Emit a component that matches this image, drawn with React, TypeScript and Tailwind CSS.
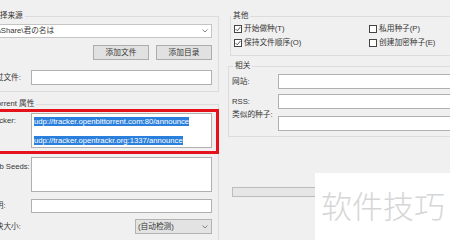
import React from "react";

function Chevron() {
  return (
    <svg width="6" height="4" viewBox="0 0 6 4" fill="none">
      <path d="M0.5 0.5L3 3L5.5 0.5" stroke="#777" strokeWidth="0.9" />
    </svg>
  );
}

function CheckBox({ checked, label }: { checked?: boolean; label: string }) {
  return (
    <div className="flex items-center h-[10px] gap-[2px]">
      <span className="w-[8px] h-[8px] border border-[#444] bg-white flex items-center justify-center shrink-0">
        {checked && (
          <svg width="6" height="6" viewBox="0 0 6 6" fill="none">
            <path d="M0.6 3.1L2.3 4.8L5.4 1" stroke="#444" strokeWidth="0.9" />
          </svg>
        )}
      </span>
      <span>{label}</span>
    </div>
  );
}

export default function App() {
  return (
    <div className="relative w-[450px] h-[240px] overflow-hidden bg-[#f0f0f0] text-[#363636] text-[7.7px] leading-[10px] font-['Liberation_Sans','Noto_Sans_CJK_SC',sans-serif] flex">
      {/* left: source + torrent properties */}
      <div className="ml-[-21px] w-[240px] shrink-0 flex flex-col">
        <div className="mt-[16px] border border-[#dcdcdc] pl-[8px] pr-[6px] pb-[6px] flex flex-col">
          <div className="-mt-[6px] ml-[2px] px-[2px] w-fit bg-[#f0f0f0]">选择来源</div>
          <div className="mt-[3px] h-[14px] bg-white border border-[#c4c4c4] flex items-center justify-between pl-[2px] pr-[3px]">
            <span className="whitespace-nowrap">D:\Share\君の名は</span>
            <Chevron />
          </div>
          <div className="mt-[7px] flex justify-end gap-[7px]">
            <button className="w-[56px] h-[15px] bg-[#e1e1e1] border border-[#adadad] text-[7.7px] leading-[10px]">添加文件</button>
            <button className="w-[56px] h-[15px] bg-[#e1e1e1] border border-[#adadad] text-[7.7px] leading-[10px]">添加目录</button>
          </div>
          <div className="mt-[10px] flex items-center">
            <div className="w-[43px] shrink-0 whitespace-nowrap">跳过文件:</div>
            <div className="flex-1 h-[15px] bg-white border border-[#b0b0b0]" />
          </div>
        </div>

        <div className="mt-[12px] border border-[#dcdcdc] pl-[8px] pr-[6px] pb-[6px] flex flex-col">
          <div className="-mt-[6px] ml-[3px] px-[2px] w-fit bg-[#f0f0f0]">Torrent 属性</div>
          <div className="relative mt-[4px] flex">
            <div className="w-[43px] shrink-0 pt-[3px] whitespace-nowrap">Tracker:</div>
            <div className="flex-1 h-[35px] bg-white border border-[#b0b0b0] pl-[2px] pt-[3px] flex flex-col">
              <div className="h-[9px] leading-[9px] whitespace-nowrap">
                <span className="bg-[#2b7fdc] text-white">udp://tracker.openbittorrent.com:80/announce</span>
              </div>
              <div className="mt-[10px] h-[9px] leading-[9px] whitespace-nowrap">
                <span className="bg-[#2b7fdc] text-white">udp://tracker.opentrackr.org:1337/announce</span>
              </div>
            </div>
            <div className="absolute left-[-30px] right-[-7px] top-[-4px] bottom-[-6px] border-[3px] border-[#e5121b]" />
          </div>
          <div className="mt-[9px] flex">
            <div className="w-[43px] shrink-0 pt-[5px] whitespace-nowrap">Web Seeds:</div>
            <div className="flex-1 h-[35px] bg-white border border-[#b0b0b0]" />
          </div>
          <div className="mt-[7px] flex items-center">
            <div className="w-[43px] shrink-0 whitespace-nowrap">说明:</div>
            <div className="flex-1 h-[14px] bg-white border border-[#b0b0b0]" />
          </div>
          <div className="mt-[6px] flex items-center">
            <div className="w-[43px] shrink-0 whitespace-nowrap">分块大小:</div>
            <div className="flex-1 flex justify-end">
              <div className="w-[77px] h-[15px] bg-[#e3e3e3] border border-[#b3b3b3] flex items-center justify-between pl-[2px] pr-[3px]">
                <span>(自动检测)</span>
                <Chevron />
              </div>
            </div>
          </div>
        </div>
      </div>

      {/* right: other + related */}
      <div className="ml-[9px] w-[240px] shrink-0 flex flex-col">
        <div className="ml-[2px] mt-[16px] border border-[#dcdcdc] pl-[3px] pb-[7px] flex flex-col">
          <div className="-mt-[6px] -ml-[3px] px-[2px] w-fit bg-[#f0f0f0]">其他</div>
          <div className="mt-[3px] grid grid-cols-[135px_1fr] gap-y-[4px]">
            <CheckBox checked label="开始做种(T)" />
            <CheckBox label="私用种子(P)" />
            <CheckBox checked label="保持文件顺序(O)" />
            <CheckBox label="创建加密种子(E)" />
          </div>
        </div>

        <div className="mt-[10px] border border-[#dcdcdc] pl-[3px] pb-[5px] flex flex-col">
          <div className="-mt-[6px] ml-[1px] px-[2px] w-fit bg-[#f0f0f0]">相关</div>
          <div className="mt-[3px] flex items-center">
            <div className="w-[46px] shrink-0">网站:</div>
            <div className="flex-1 h-[15px] bg-white border border-[#b0b0b0]" />
          </div>
          <div className="mt-[5px] flex items-center">
            <div className="w-[46px] shrink-0">RSS:</div>
            <div className="flex-1 h-[15px] bg-white border border-[#b0b0b0]" />
          </div>
          <div className="mt-[7px] flex items-start">
            <div className="w-[46px] shrink-0 -mt-[6px] whitespace-nowrap">类似的种子:</div>
            <div className="flex-1 h-[15px] bg-white border border-[#b0b0b0]" />
          </div>
        </div>

        <div className="mt-[50px] ml-[4px] w-[200px] h-[10px] bg-[#e6e6e6] border border-[#bcbcbc]" />
      </div>

      {/* watermark */}
      <div className="absolute left-[315px] top-[173px] right-0 bottom-0 bg-white pl-[6px] pt-[14px]">
        <span className="text-[31px] leading-[36px] text-[#d6d6d6] font-['Noto_Sans_CJK_SC',sans-serif] font-light whitespace-nowrap">软件技巧</span>
      </div>
    </div>
  );
}
